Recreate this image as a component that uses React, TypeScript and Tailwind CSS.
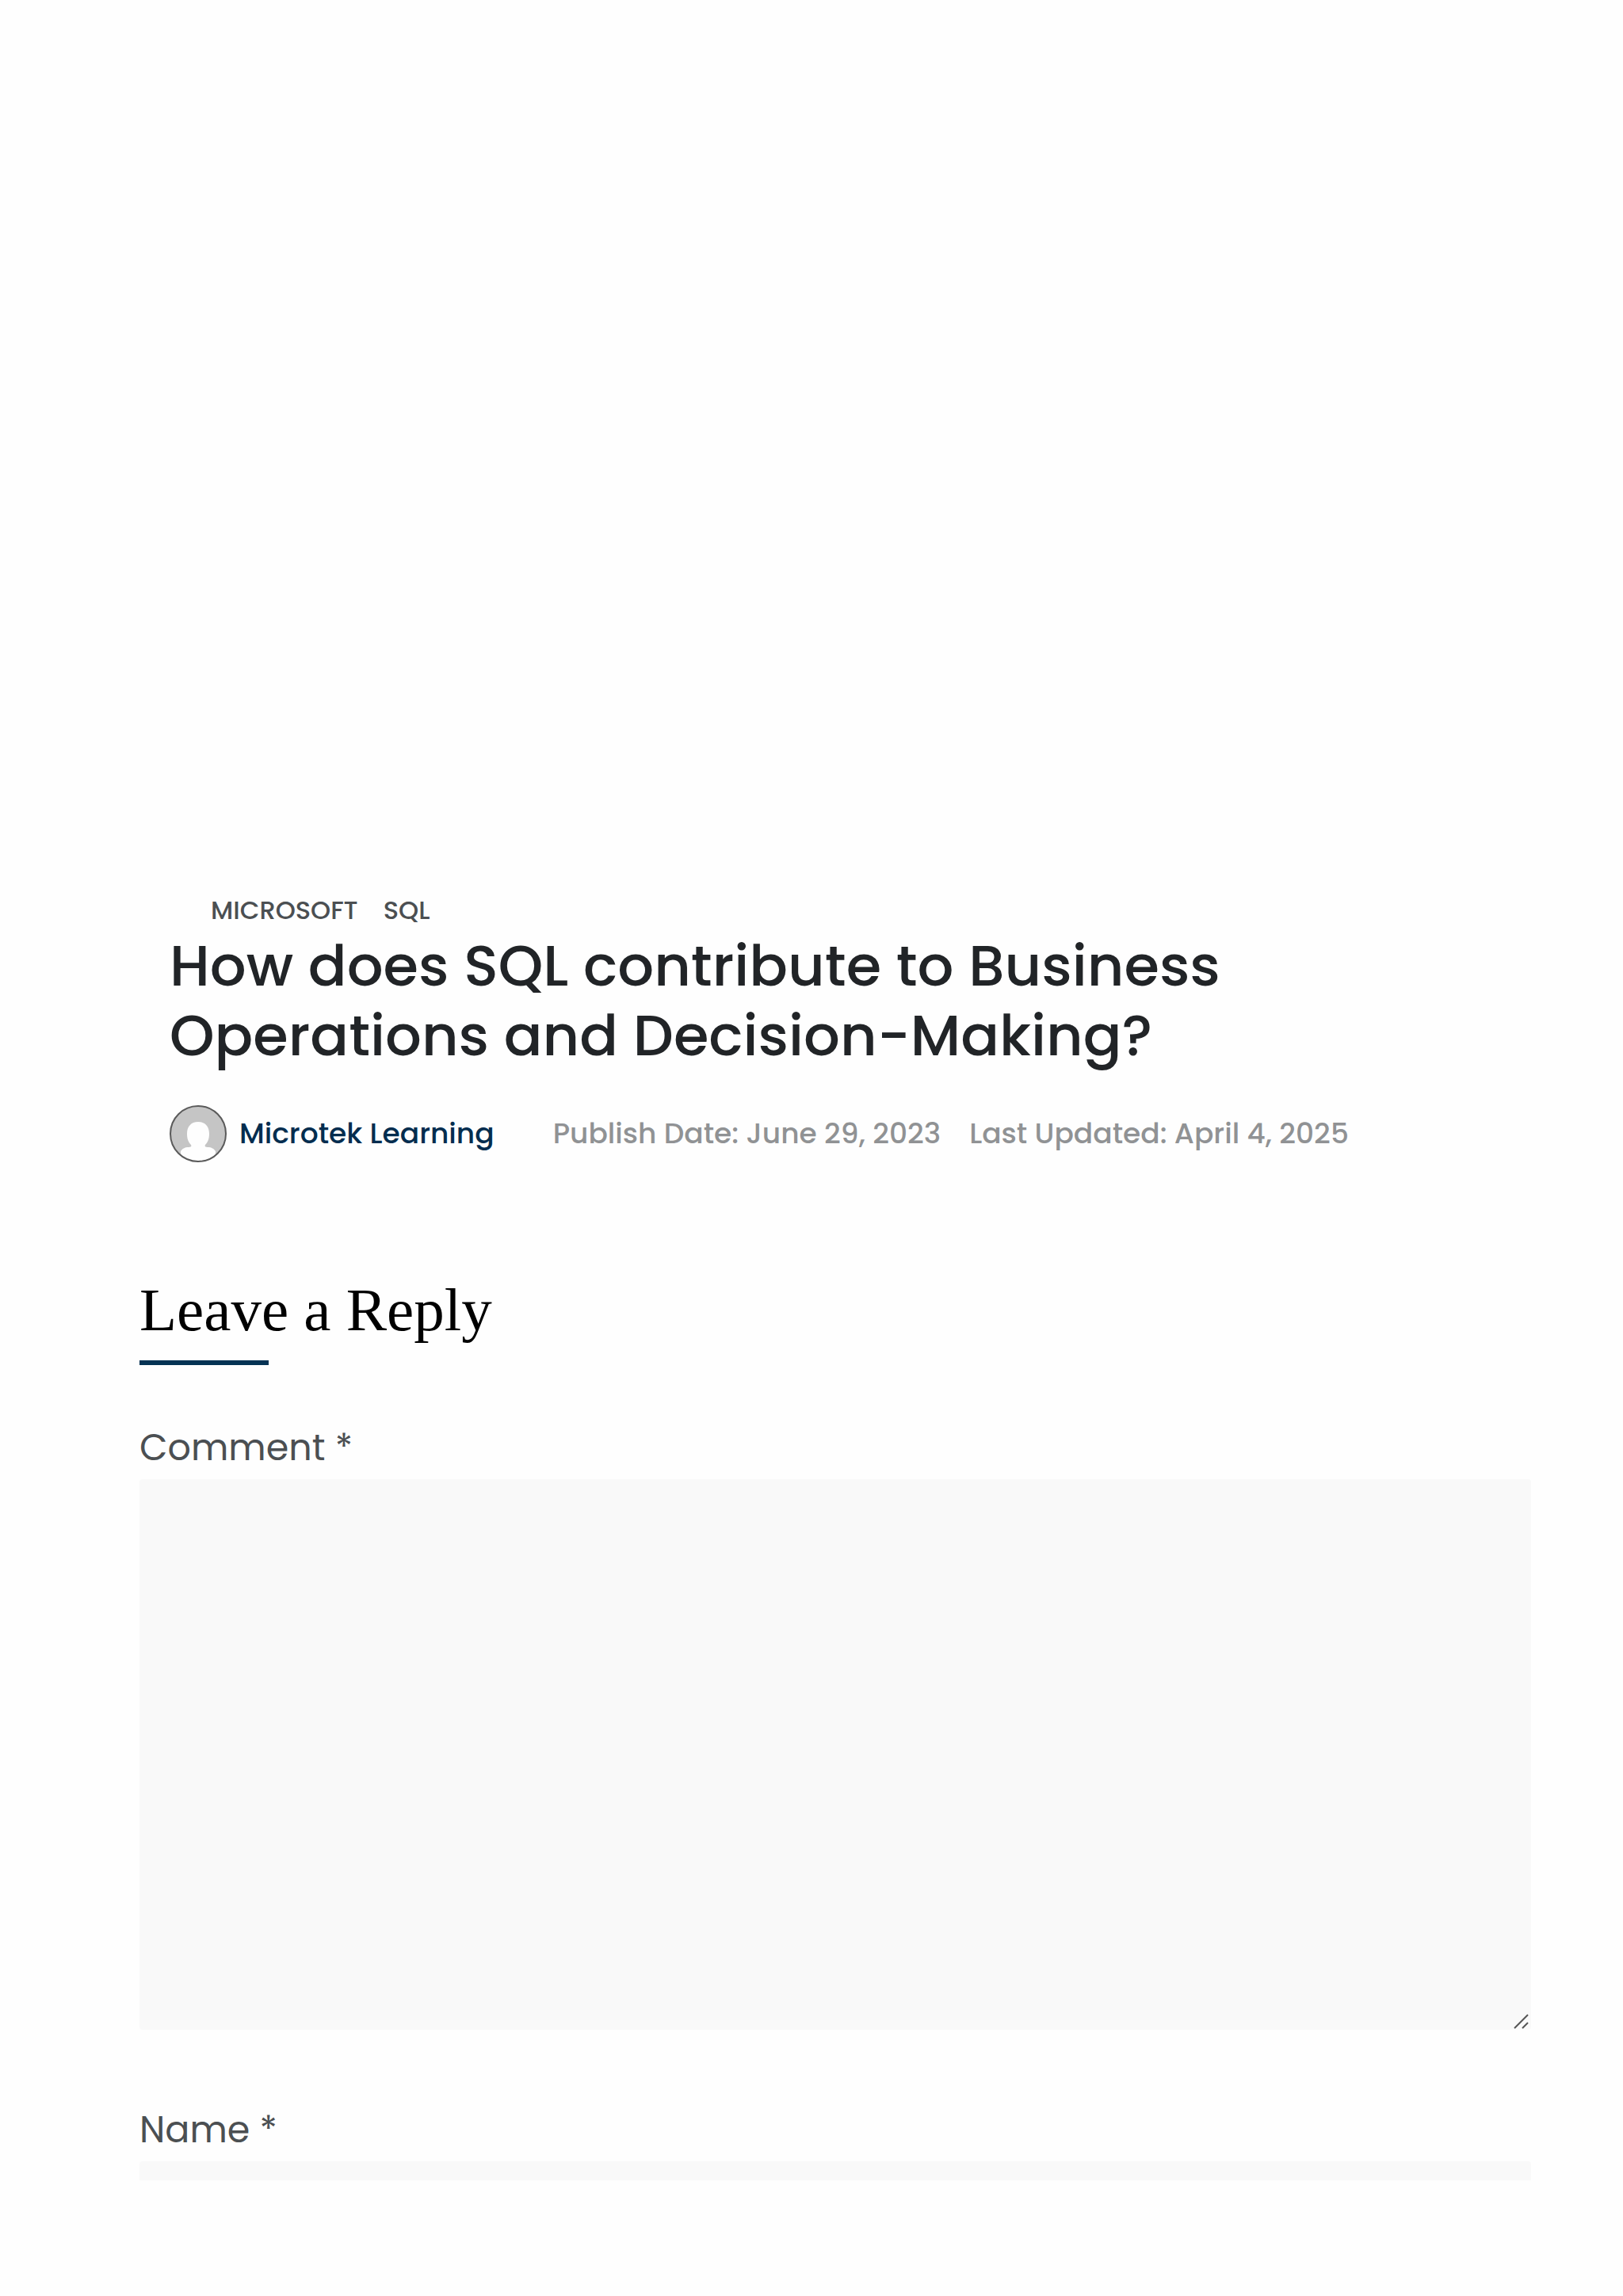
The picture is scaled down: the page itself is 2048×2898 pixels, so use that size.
const categories = ["Microsoft", "SQL"]

function Avatar() {
  return (
    <svg viewBox="0 0 72 72" className="h-18 w-18 shrink-0" aria-hidden="true">
      <defs>
        <clipPath id="avatar-circle">
          <circle cx="36" cy="36" r="35" />
        </clipPath>
      </defs>
      <circle cx="36" cy="36" r="35" fill="#c5c5c5" />
      <g clipPath="url(#avatar-circle)" fill="#fefefe">
        <path d="M36 21c-9 0-14 6-14 15 0 7 2 11 5 14 1 2 0 3-3 3-5 0-8 2-10 5v14h44V58c-2-3-5-5-10-5-3 0-4-1-3-3 3-3 5-7 5-14 0-9-5-15-14-15z" />
      </g>
      <circle cx="36" cy="36" r="35" fill="none" stroke="#5a5a5a" strokeWidth="2" />
    </svg>
  )
}

function PostHeader() {
  return (
    <header className="pl-[38px]">
      {/* Categories */}
      <ul className="flex gap-8 pl-[52px] text-[32px] leading-10 font-medium text-[#4b4f52] uppercase">
        {categories.map((name) => (
          <li key={name}>
            <a href="#">{name}</a>
          </li>
        ))}
      </ul>

      <h1 className="mt-1.5 max-w-[1440px] text-[72px] leading-[88px] font-medium text-[#212427]">
        How does SQL contribute to Business Operations and Decision-Making?
      </h1>

      {/* Author and dates */}
      <div className="mt-11 flex items-center text-[36px] leading-[48px] font-medium text-[#909294]">
        <a href="#" className="flex items-center gap-4 text-[#032d4f]">
          <Avatar />
          <span>Microtek Learning</span>
        </a>
        <span className="ml-[74px]">Publish Date: June 29, 2023</span>
        <span className="ml-9">Last Updated: April 4, 2025</span>
      </div>
    </header>
  )
}

function CommentForm() {
  return (
    <section className="mt-[142px]">
      <h2 className="font-['Liberation_Serif',serif] text-[77px] leading-[88px] text-black">Leave a Reply</h2>
      <div className="mt-5 h-1.5 w-[163px] bg-[#053354]" />

      <form className="mt-[74px] text-[46px] leading-[60px] text-[#4b4f52]">
        <label htmlFor="comment" className="block">
          Comment *
        </label>
        <div className="relative mt-2.5">
          <textarea id="comment" className="block h-[695px] w-full resize-none rounded-sm bg-[#f9f9f9] p-6 outline-none" />
          {/* Resize grip */}
          <svg viewBox="0 0 20 20" className="pointer-events-none absolute right-0.5 bottom-0 h-5 w-5">
            <path d="M1 18L18 1M11 18L18 11" stroke="#555" strokeWidth="2" fill="none" />
          </svg>
        </div>

        <label htmlFor="name" className="mt-24 block">
          Name *
        </label>
        <input id="name" type="text" className="mt-2.5 block h-6 w-full rounded-t-sm bg-[#f9f9f9] px-6 outline-none" />
      </form>
    </section>
  )
}

export default function App() {
  return (
    <main className="min-h-screen bg-[#fefefe] pt-[1129px] pr-[116px] pb-36 pl-44 font-['Poppins','Inter',sans-serif]">
      <PostHeader />
      <CommentForm />
    </main>
  )
}
